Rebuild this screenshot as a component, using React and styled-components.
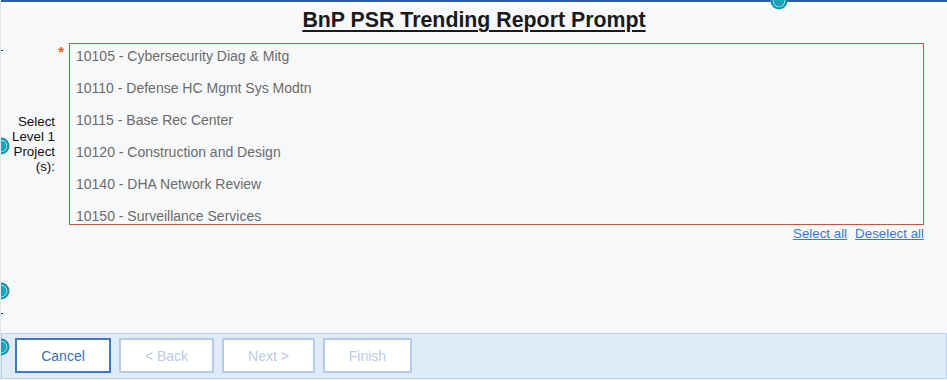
import React from 'react';
import styled, { createGlobalStyle } from 'styled-components';

const GlobalStyle = createGlobalStyle`
  html, body {
    margin: 0;
    padding: 0;
    background: #f7f8fa;
    font-family: "Liberation Sans", Arial, sans-serif;
  }
`;

const Page = styled.div`
  position: relative;
  height: 380px;
  overflow: hidden;
  display: flex;
  flex-direction: column;
  background: #f7f8fa;
  border-left: 1px solid #e1e4e9;
  box-sizing: border-box;
`;

const TopBar = styled.div`
  height: 2px;
  background: #2c5ea6;
  flex-shrink: 0;
`;

const Title = styled.h1`
  margin: 6px 0 0;
  font-size: 16pt;
  line-height: 24px;
  font-weight: bold;
  text-align: center;
  color: #1a1a1a;
  text-decoration: underline;
  text-underline-offset: 3px;
  text-decoration-thickness: 2px;
`;

const FormRow = styled.div`
  display: flex;
  margin-top: 11px;
  padding-left: 7px;
`;

const LabelCol = styled.div`
  position: relative;
  width: 61px;
  flex-shrink: 0;
  display: flex;
  justify-content: flex-end;
`;

const Required = styled.span`
  position: absolute;
  top: 1px;
  right: 5px;
  color: #ee5a1c;
  font-size: 15px;
  font-weight: bold;
  line-height: 15px;
`;

const Label = styled.label`
  width: 50px;
  margin-top: 71px;
  margin-right: 14px;
  font-size: 10pt;
  line-height: 15px;
  text-align: right;
  color: #111;
`;

const ListBox = styled.div`
  width: 853px;
  height: 180px;
  border: 1px solid #c6563f;
  overflow: hidden;
  background: #f7f8fa;
`;

const Option = styled.div`
  padding: 0 6px;
  margin-bottom: 8px;
  font-size: 14px;
  line-height: 24px;
  color: #6b6b6b;
  white-space: nowrap;
`;

const LinkRow = styled.div`
  display: flex;
  justify-content: flex-end;
  gap: 8px;
  padding-right: 23px;
  margin-top: 1px;
`;

const TextLink = styled.a`
  font-size: 10pt;
  line-height: 16px;
  color: #3d77c5;
  text-decoration: underline;
  cursor: pointer;
`;

const Footer = styled.div`
  margin-top: auto;
  margin-bottom: 1px;
  height: 46px;
  display: flex;
  align-items: flex-start;
  gap: 8px;
  padding: 4px 0 0 13px;
  background: #dfecf8;
  border: 1px solid #b7d2ec;
  box-sizing: border-box;
`;

const WizardButton = styled.button`
  width: ${p => p.$w}px;
  height: 35px;
  box-sizing: border-box;
  background: #fff;
  border: 2px solid ${p => (p.disabled ? '#b6cbe8' : '#3f77c3')};
  color: ${p => (p.disabled ? '#b9cbe7' : '#3b6fb8')};
  font-family: "Liberation Sans", Arial, sans-serif;
  font-size: 14px;
  padding: 0;
  cursor: ${p => (p.disabled ? 'default' : 'pointer')};
`;

const Handle = styled.span`
  position: absolute;
  width: 17px;
  height: 17px;
  box-sizing: border-box;
  border-radius: 50%;
  background: #1ba3b7;
  border: 2px solid #1694a8;
  box-shadow: inset 0 0 0 1px #bfe8ef;
  transform: translate(-50%, -50%);
`;

const Tick = styled.span`
  position: absolute;
  left: 0;
  width: 2px;
  height: 1px;
  background: #1f3a6b;
`;

const projects = [
  '10105 - Cybersecurity Diag & Mitg',
  '10110 - Defense HC Mgmt Sys Modtn',
  '10115 - Base Rec Center',
  '10120 - Construction and Design',
  '10140 - DHA Network Review',
  '10150 - Surveillance Services',
];

const buttons = [
  { label: 'Cancel', w: 96, disabled: false },
  { label: '< Back', w: 95, disabled: true },
  { label: 'Next >', w: 93, disabled: true },
  { label: 'Finish', w: 89, disabled: true },
];

const handles = [
  { x: 778, y: 1 },
  { x: 0, y: 146 },
  { x: 0, y: 291 },
  { x: 0, y: 347 },
];

export default function App() {
  return (
    <>
      <GlobalStyle />
      <Page>
        <TopBar />
        <Title>BnP PSR Trending Report Prompt</Title>
        <FormRow>
          <LabelCol>
            <Required>*</Required>
            <Label>Select Level 1 Project (s):</Label>
          </LabelCol>
          <ListBox>
            {projects.map(p => (
              <Option key={p}>{p}</Option>
            ))}
          </ListBox>
        </FormRow>
        <LinkRow>
          <TextLink>Select all</TextLink>
          <TextLink>Deselect all</TextLink>
        </LinkRow>
        <Footer>
          {buttons.map(b => (
            <WizardButton key={b.label} $w={b.w} disabled={b.disabled}>
              {b.label}
            </WizardButton>
          ))}
        </Footer>
        <Tick style={{ top: 50 }} />
        <Tick style={{ top: 313 }} />
        {handles.map((h, i) => (
          <Handle key={i} style={{ left: h.x, top: h.y }} />
        ))}
      </Page>
    </>
  );
}
